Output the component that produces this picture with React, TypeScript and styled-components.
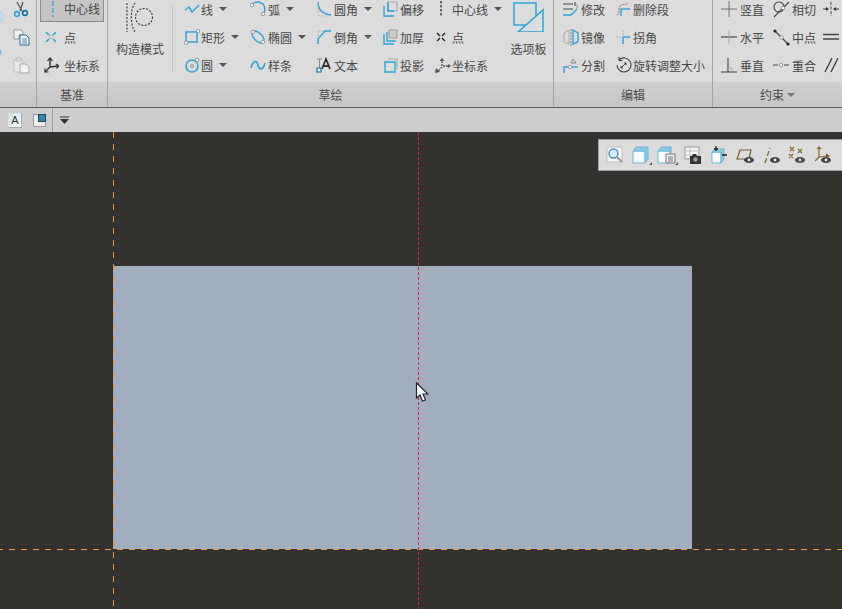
import React from 'react';
import styled, { createGlobalStyle } from 'styled-components';

const BLUE = '#2aa6dc';
const INK = '#484848';

const GlobalStyle = createGlobalStyle`
  html, body {
    margin: 0;
    padding: 0;
    height: 100%;
    overflow: hidden;
    background: #34322e;
  }
  body {
    font-family: "Noto Sans CJK SC", "Liberation Sans", sans-serif;
    font-size: 12px;
    color: ${INK};
  }
`;

const Page = styled.div`
  width: 842px;
  height: 609px;
  display: flex;
  flex-direction: column;
  overflow: hidden;
`;

const Ribbon = styled.div`
  display: flex;
  height: 108px;
  flex: none;
  border-bottom: 1px solid #5e5e5e;
  box-sizing: border-box;
  background: #dcdcdc;
`;

const Group = styled.section<{ $width: number; $last?: boolean }>`
  width: ${(p) => p.$width}px;
  flex: none;
  display: flex;
  flex-direction: column;
  box-sizing: border-box;
  border-right: ${(p) => (p.$last ? 'none' : '1px solid #a2a2a2')};
`;

const GroupBody = styled.div<{ $pad?: number }>`
  height: 82px;
  display: flex;
  overflow: hidden;
  padding-left: ${(p) => p.$pad ?? 0}px;
`;

const GroupLabel = styled.div`
  height: 25px;
  display: flex;
  align-items: center;
  justify-content: center;
  gap: 3px;
  background: linear-gradient(#cfcfcf, #c6c6c6);
  line-height: 25px;
  color: #4a4a4a;
`;

const LabelCaret = styled.span`
  border-left: 4px solid transparent;
  border-right: 4px solid transparent;
  border-top: 4px solid #777;
`;

const Column = styled.div<{ $width: number }>`
  width: ${(p) => p.$width}px;
  flex: none;
  margin-top: -5px;
  display: flex;
  flex-direction: column;
`;

const Tool = styled.div<{ $active?: boolean }>`
  height: 28px;
  flex: none;
  display: flex;
  align-items: center;
  white-space: nowrap;
  box-sizing: border-box;
  ${(p) =>
    p.$active
      ? `background:#c5c5c5; border:1px solid #8c8c8c; margin:0 3px 1px 3px; height:27px;`
      : ''}
`;

const ToolIcon = styled.span<{ $width: number }>`
  width: ${(p) => p.$width}px;
  flex: none;
  display: flex;
  align-items: center;
  justify-content: center;
`;

const Caret = styled.span`
  margin-left: 6px;
  border-left: 4px solid transparent;
  border-right: 4px solid transparent;
  border-top: 4px solid #555;
`;

const BigTool = styled.div<{ $width: number }>`
  width: ${(p) => p.$width}px;
  flex: none;
  display: flex;
  flex-direction: column;
  align-items: center;
  padding-top: 2px;
  gap: 8px;
  white-space: nowrap;
`;

const GroupRule = styled.div`
  width: 1px;
  flex: none;
  height: 68px;
  margin: 5px 9px 0 0;
  background: #c4c4c4;
`;

const ClippedIcons = styled.div`
  width: 12px;
  flex: none;
  display: flex;
  flex-direction: column;
  padding-top: 10px;
  gap: 26px;
`;

const Toolbar = styled.div`
  height: 24px;
  flex: none;
  display: flex;
  align-items: center;
  padding-left: 8px;
  background: #cdcdcd;
`;

const ToolbarRule = styled.div`
  width: 1px;
  height: 24px;
  margin: 0 7px 0 6px;
  background: #a0a0a0;
`;

const Canvas = styled.main`
  position: relative;
  flex: 1;
  background: #34322e;
  overflow: hidden;
`;

const Sheet = styled.div`
  position: absolute;
  left: 113px;
  top: 134px;
  width: 579px;
  height: 283px;
  background: #a0aebd;
`;

const AxisV = styled.div`
  position: absolute;
  left: 113px;
  top: 0;
  bottom: 0;
  width: 1px;
  background: repeating-linear-gradient(to bottom, #ee9433 0 6px, transparent 6px 12px);
`;

const AxisH = styled.div`
  position: absolute;
  left: 0;
  right: 0;
  top: 417px;
  height: 1px;
  background: repeating-linear-gradient(
    to right,
    #ee9433 0 3px,
    transparent 3px 9px,
    #ee9433 9px 12px
  );
`;

const CenterLine = styled.div`
  position: absolute;
  left: 418px;
  top: 0;
  bottom: 0;
  width: 1px;
  background: repeating-linear-gradient(to bottom, #ef1744 0 3px, transparent 3px 5px);
`;

const Cursor = styled.svg`
  position: absolute;
  left: 415px;
  top: 250px;
`;

const ViewBar = styled.div`
  position: absolute;
  left: 598px;
  right: 0;
  top: 7px;
  height: 32px;
  box-sizing: border-box;
  display: flex;
  align-items: center;
  padding-left: 3px;
  background: #dcdcdc;
  border: 1px solid #9c9c9c;
  border-right: none;
`;

const ViewButton = styled.span`
  width: 26px;
  flex: none;
  display: flex;
  justify-content: center;
`;

function Ico({ s = 16, children }: { s?: number; children: React.ReactNode }) {
  return (
    <svg width={s} height={s} viewBox={`0 0 ${s} ${s}`} fill="none" strokeWidth={1.3}>
      {children}
    </svg>
  );
}

const Node = ({ x, y }: { x: number; y: number }) => (
  <circle cx={x} cy={y} r={1.8} fill="#f2f2f2" stroke="#8a8a8a" strokeWidth={0.8} />
);

const Eye = ({ x, y }: { x: number; y: number }) => (
  <g>
    <ellipse cx={x} cy={y} rx={5} ry={3} fill="#444" />
    <circle cx={x} cy={y} r={1.4} fill="#e8e8e8" />
  </g>
);

const icons: Record<string, React.ReactNode> = {
  cut: (
    <Ico>
      <path d="M4 1l5 9M10 1L7 10" stroke="#555" />
      <circle cx="4" cy="13" r="2.4" stroke={BLUE} strokeWidth={1.6} />
      <circle cx="12" cy="12" r="2.4" stroke="#1e6f96" strokeWidth={1.6} />
    </Ico>
  ),
  copy: (
    <Ico s={17}>
      <path d="M1 1h7l2 2v3H6v4H1z" fill="#f4f4f4" stroke="#999" strokeWidth={1} />
      <path d="M7 6h6l3 3v7H7z" fill="#f8f8f8" stroke="#1e6f96" strokeWidth={1} />
      <path d="M9 10h5M9 12h5M9 14h5" stroke="#1e6f96" strokeWidth={0.8} />
    </Ico>
  ),
  paste: (
    <Ico s={17}>
      <path d="M1 3h9v12H1z" fill="#e9e9e9" stroke="#c0c0c0" strokeWidth={1} />
      <path d="M3 1h5v3H3z" fill="#ddd" stroke="#bbb" strokeWidth={1} />
      <path d="M7 7h6l3 3v6H7z" fill="#f2f2f2" stroke="#aaa" strokeWidth={1} />
    </Ico>
  ),
  centerline: (
    <Ico>
      <path d="M8 0v16" stroke={BLUE} strokeWidth={1.3} strokeDasharray="5 2" />
    </Ico>
  ),
  point: (
    <Ico>
      <path d="M3 3l3 3M13 3l-3 3M3 13l3-3M13 13l-3-3" stroke={BLUE} strokeWidth={1.5} />
      <rect x="6.500" y="6.500" width="3" height="3" stroke="#bbb" strokeWidth={0.8} />
    </Ico>
  ),
  axes: (
    <Ico>
      <path d="M7 2v8M7 10l8-1M7 10l-5 5" stroke="#333" strokeWidth={1.4} />
      <path d="M4.500 4L7 1l2.500 3M13 7l3 2-2.500 2.500M2 11.500V15h3.500" stroke="#333" strokeWidth={1.2} />
    </Ico>
  ),
  line: (
    <Ico>
      <path d="M1 9l4-3 3 5 7-7" stroke={BLUE} strokeWidth={1.5} />
    </Ico>
  ),
  rect: (
    <Ico>
      <path d="M2 3h11v10H2z" stroke={BLUE} strokeWidth={1.5} />
      <Node x={14} y={2} />
      <Node x={2} y={14} />
    </Ico>
  ),
  circle: (
    <Ico>
      <circle cx="8" cy="9" r="6" stroke={BLUE} strokeWidth={1.5} />
      <circle cx="8" cy="9" r="2" fill="#aaa" />
      <Node x={13} y={3} />
    </Ico>
  ),
  arc: (
    <Ico>
      <path d="M2 3a9 9 0 0 1 11 0 9 9 0 0 1 1 9" stroke={BLUE} strokeWidth={1.5} />
      <Node x={2} y={4} />
      <Node x={13} y={13} />
    </Ico>
  ),
  ellipse: (
    <Ico>
      <ellipse cx="8" cy="8" rx="7.500" ry="4" transform="rotate(45 8 8)" stroke={BLUE} strokeWidth={1.5} />
      <Node x={3} y={3} />
      <Node x={13} y={13} />
    </Ico>
  ),
  spline: (
    <Ico>
      <path d="M1 11c2-8 6-8 7-3s5 6 7-2" stroke={BLUE} strokeWidth={1.6} />
    </Ico>
  ),
  fillet: (
    <Ico>
      <path d="M2 1c0 8 4 12 13 13" stroke={BLUE} strokeWidth={1.5} />
      <path d="M2 1v14h13" stroke="#aaa" strokeWidth={0.8} strokeDasharray="1.500 1.500" />
    </Ico>
  ),
  chamfer: (
    <Ico>
      <path d="M2 15V10L9 2h6" stroke={BLUE} strokeWidth={1.5} />
      <path d="M2 10V2h7" stroke="#999" strokeWidth={0.8} strokeDasharray="1.500 1.500" />
    </Ico>
  ),
  text: (
    <Ico>
      <path d="M1 2h5M3.500 2v9" stroke="#888" strokeWidth={1} />
      <path d="M6 12l4-10 4 10M7.500 9h5" stroke="#333" strokeWidth={1.8} />
      <rect x="1" y="11" width="4" height="4" fill="#fff" stroke="#1e7fae" />
    </Ico>
  ),
  offset: (
    <Ico>
      <path d="M5 1h9v9H5z" stroke="#aaa" strokeWidth={1.2} />
      <path d="M1 5v10h10M5 1v9h6" stroke={BLUE} strokeWidth={1.4} />
    </Ico>
  ),
  thicken: (
    <Ico>
      <path d="M6 1h8v8H6z" fill="#ccc" stroke="#999" strokeWidth={1} />
      <path d="M1 5v10h10M4 3v9h9" stroke={BLUE} strokeWidth={1.4} />
    </Ico>
  ),
  project: (
    <Ico>
      <path d="M5 2h9v10" stroke="#aaa" strokeWidth={1.2} />
      <path d="M2 5h10v10H2z" stroke={BLUE} strokeWidth={1.4} />
    </Ico>
  ),
  dashV: (
    <Ico>
      <path d="M6 0v16" stroke="#222" strokeWidth={1.2} strokeDasharray="2.500 1.500" />
    </Ico>
  ),
  pointK: (
    <Ico>
      <path d="M2 4l3 3M10 4L7 7M2 12l3-3M10 12L7 9" stroke="#222" strokeWidth={1.4} />
    </Ico>
  ),
  axesK: (
    <Ico s={17}>
      <path d="M8 4v5M9 9h5M8 10l-4 4" stroke="#555" strokeDasharray="2 1" />
      <path d="M5.500 4L8 1l2.500 3zM14 7l3 2-3 2zM1 16l1-5 4 4z" fill="#555" />
    </Ico>
  ),
  modify: (
    <Ico s={17}>
      <path d="M1 3h10M1 8h10M13 1v4" stroke="#444" strokeWidth={1} />
      <path d="M1 14h8l6-6" stroke={BLUE} strokeWidth={1.4} />
      <path d="M13 3l3 2-2 3" stroke="#888" strokeWidth={0.8} />
    </Ico>
  ),
  trim: (
    <Ico>
      <path d="M2 14c4-2 0-6 3-9s5 0 8-3" stroke="#b5523c" strokeWidth={1} strokeDasharray="2 1" />
      <path d="M6 15V8h9" stroke={BLUE} strokeWidth={1.5} />
    </Ico>
  ),
  mirror: (
    <Ico s={17}>
      <path d="M2 4l5-3v14l-5-2z" fill="#ddd" stroke="#aaa" strokeWidth={1} />
      <path d="M11 1l5 3v9l-5 2z" stroke={BLUE} strokeWidth={1.4} />
      <path d="M9 0v17" stroke="#777" strokeWidth={0.8} strokeDasharray="2 1" />
    </Ico>
  ),
  corner: (
    <Ico>
      <path d="M1 8h5M8 1v5" stroke="#aaa" strokeWidth={1} strokeDasharray="2 1" />
      <path d="M8 15V8h7" stroke={BLUE} strokeWidth={1.5} />
    </Ico>
  ),
  split: (
    <Ico s={17}>
      <path d="M2 16V10h4" stroke={BLUE} strokeWidth={1.4} />
      <path d="M10 10h6" stroke={BLUE} strokeWidth={1.4} />
      <path d="M11 2l3 4h-5zM6 10h4" stroke="#777" strokeWidth={0.8} />
      <Node x={8} y={10} />
    </Ico>
  ),
  rotate: (
    <Ico s={17}>
      <path d="M4 3a7 7 0 1 1-2 5M4 0v3.500h3.500" stroke="#444" strokeWidth={1.1} />
      <path d="M6 11l5-5M9 6h2v2M6 9v2h2" stroke="#444" strokeWidth={1} />
    </Ico>
  ),
  vertical: (
    <Ico>
      <path d="M8 0v16M0 8h16" stroke="#777" strokeWidth={1} />
    </Ico>
  ),
  horizontal: (
    <Ico>
      <path d="M0 8h16" stroke="#444" strokeWidth={1.2} />
      <path d="M8 1v14" stroke="#aaa" strokeWidth={1} />
    </Ico>
  ),
  perpendicular: (
    <Ico>
      <path d="M0 15h16M7 1v14" stroke="#444" strokeWidth={1.1} />
      <path d="M7 11h4v4" stroke="#999" strokeWidth={0.8} />
    </Ico>
  ),
  tangent: (
    <Ico s={17}>
      <circle cx="6" cy="6" r="5" stroke="#444" strokeWidth={1.1} />
      <path d="M1 16L16 1" stroke="#444" strokeWidth={1.1} />
      <Node x={10} y={7} />
    </Ico>
  ),
  midpoint: (
    <Ico s={17}>
      <path d="M2 2l13 13" stroke="#444" strokeWidth={1.2} />
      <circle cx="2" cy="2" r="1.600" fill="#222" />
      <circle cx="15" cy="15" r="1.600" fill="#222" />
      <Node x={8.500} y={8.500} />
    </Ico>
  ),
  coincident: (
    <Ico>
      <path d="M0 8h5M11 8h5" stroke="#444" strokeWidth={1.1} />
      <Node x={8} y={8} />
    </Ico>
  ),
  fix: (
    <Ico>
      <path d="M8 1v14" stroke="#444" strokeWidth={1} strokeDasharray="3 1.500" />
      <path d="M0 8h5M16 8h-5" stroke="#333" strokeWidth={1.2} />
      <path d="M3 6l3 2-3 2zM13 6l-3 2 3 2z" fill="#333" />
    </Ico>
  ),
  equal: (
    <Ico>
      <path d="M0 5.500h16M0 10h16" stroke="#444" strokeWidth={1.3} />
    </Ico>
  ),
  parallel: (
    <Ico>
      <path d="M2 15L9 1M8 15L15 1" stroke="#333" strokeWidth={1.2} />
    </Ico>
  )
};

function ToolItem({
  name,
  label,
  width = 20,
  caret,
  active
}: {
  name: string;
  label?: string;
  width?: number;
  caret?: boolean;
  active?: boolean;
}) {
  return (
    <Tool $active={active}>
      <ToolIcon $width={width}>{icons[name]}</ToolIcon>
      {label}
      {caret && <Caret />}
    </Tool>
  );
}

const AppIconA = styled.span`
  width: 14px;
  height: 15px;
  display: flex;
  align-items: center;
  justify-content: center;
  font-family: "Liberation Sans", sans-serif;
  font-size: 11px;
  color: #333;
  background: linear-gradient(135deg, #cfe4ee, #fafafa);
  border: 1px solid #aaa;
  border-top-color: #ddd;
  border-left-color: #ddd;
  box-sizing: border-box;
`;

const AppIconSquare = styled.span`
  width: 13px;
  height: 13px;
  margin-left: 11px;
  position: relative;
  background: #ececec;
  border: 1px solid #999;
  box-sizing: border-box;

  &::after {
    content: '';
    position: absolute;
    right: -1px;
    top: -1px;
    width: 8px;
    height: 8px;
    background: #2e87a8;
    border: 1px solid #245;
    box-sizing: border-box;
  }
`;

const ToolbarMenu = styled.svg`
  flex: none;
`;

const corner = <path d="M22 16v3h-3z" fill="#555" />;

const viewIcons: React.ReactNode[] = [
  <svg width="18" height="18" viewBox="0 0 18 18" key="zoom">
    <path d="M1 1h15v15H1z" fill="#f8f8f8" stroke="#bbb" />
    <circle cx="7.500" cy="7.500" r="4.500" fill="#d8eef8" stroke="#3f94bd" strokeWidth={1.4} />
    <path d="M11 11l5 5" stroke="#999" strokeWidth={2} />
  </svg>,
  <svg width="22" height="19" viewBox="0 0 22 19" key="cube">
    <path d="M3 5h12v12H3z" fill="#f8fcff" stroke="#6bb6d8" />
    <path d="M3 5l3-4h12v12l-3 4V5z" fill="#8ecbe6" stroke="#6bb6d8" />
    {corner}
  </svg>,
  <svg width="22" height="19" viewBox="0 0 22 19" key="cubeList">
    <path d="M2 5h12v12H2z" fill="#f8fcff" stroke="#6bb6d8" />
    <path d="M2 5l3-4h10v6H14V5z" fill="#8ecbe6" stroke="#6bb6d8" />
    <path d="M10 8h9v9h-9z" fill="#eee" stroke="#777" />
    <path d="M12 11h5M12 13h5M12 15h5" stroke="#555" strokeWidth={0.8} />
    {corner}
  </svg>,
  <svg width="18" height="18" viewBox="0 0 18 18" key="camera">
    <path d="M1 1h14v12H1z" fill="#f4f4f4" stroke="#999" />
    <path d="M1 5h14M1 9h14M6 1v12" stroke="#bbb" strokeWidth={0.8} />
    <path d="M6 10h2l1-2h3l1 2h4v8H6z" fill="#333" />
    <circle cx="11.500" cy="13.500" r="2.300" fill="#999" />
  </svg>,
  <svg width="18" height="18" viewBox="0 0 18 18" key="move">
    <path d="M2 6h9v11H2z" fill="#f8fcff" stroke="#6bb6d8" />
    <path d="M2 6l3-3h9v10l-3 4V6z" fill="#8ecbe6" stroke="#6bb6d8" />
    <path d="M6 0v5M4 3h4M12 9h5" stroke="#222" strokeWidth={1.3} />
  </svg>,
  <svg width="18" height="18" viewBox="0 0 18 18" key="plane">
    <path d="M1 13L4 4h11l-2 9z" fill="none" stroke="#7a5a2c" strokeWidth={1.2} />
    <Eye x={13} y={14} />
  </svg>,
  <svg width="18" height="18" viewBox="0 0 18 18" key="axis">
    <path d="M3 17L8 2" stroke="#8a6a30" strokeWidth={1.4} strokeDasharray="5 2.500" />
    <Eye x={13} y={14} />
  </svg>,
  <svg width="18" height="18" viewBox="0 0 18 18" key="points">
    <path
      d="M2 1l4 4M6 1L2 5M10 3l4 4M14 3l-4 4M1 8l4 4M5 8l-4 4"
      stroke="#8a6a30"
      strokeWidth={1.3}
    />
    <Eye x={12} y={14} />
  </svg>,
  <svg width="18" height="18" viewBox="0 0 18 18" key="coord">
    <path d="M5 1v10M5 11l9-1M5 11l-4 4M3 3l2-2 2 2M12 8l3 2-3 1" stroke="#8a6a30" strokeWidth={1.2} />
    <Eye x={12} y={14} />
  </svg>
];

export default function App() {
  return (
    <Page>
      <GlobalStyle />
      <Ribbon>
        <Group $width={37}>
          <GroupBody>
            <ClippedIcons>
              <svg width="4" height="14" viewBox="0 0 4 14">
                <path d="M0 1l3 2v8l-3 1z" fill="#cfe6f2" stroke="#a9cfe2" />
              </svg>
              <svg width="2" height="6" viewBox="0 0 2 6">
                <path d="M0 0h1M0 2h2M0 4h1" stroke={BLUE} />
              </svg>
            </ClippedIcons>
            <Column $width={20}>
              <ToolItem name="cut" width={18} />
              <ToolItem name="copy" width={18} />
              <ToolItem name="paste" width={18} />
            </Column>
          </GroupBody>
          <GroupLabel />
        </Group>

        <Group $width={71}>
          <GroupBody>
            <Column $width={70}>
              <ToolItem name="centerline" width={23} label="中心线" active />
              <ToolItem name="point" width={27} label="点" />
              <ToolItem name="axes" width={27} label="坐标系" />
            </Column>
          </GroupBody>
          <GroupLabel>基准</GroupLabel>
        </Group>

        <Group $width={446}>
          <GroupBody>
            <BigTool $width={64}>
              <svg width="30" height="30" viewBox="0 0 30 30" fill="none" stroke="#333" strokeWidth={1.1}>
                <path d="M2 1v30" strokeDasharray="2 1.500" />
                <path d="M10 1C5 8 5 22 10 30" strokeDasharray="2 1.500" />
                <circle cx="19" cy="15" r="8.500" strokeDasharray="2 1.500" />
              </svg>
              构造模式
            </BigTool>
            <GroupRule />
            <Column $width={66}>
              <ToolItem name="line" width={19} label="线" caret />
              <ToolItem name="rect" width={19} label="矩形" caret />
              <ToolItem name="circle" width={19} label="圆" caret />
            </Column>
            <Column $width={66}>
              <ToolItem name="arc" label="弧" caret />
              <ToolItem name="ellipse" label="椭圆" caret />
              <ToolItem name="spline" label="样条" />
            </Column>
            <Column $width={67}>
              <ToolItem name="fillet" label="圆角" caret />
              <ToolItem name="chamfer" label="倒角" caret />
              <ToolItem name="text" label="文本" />
            </Column>
            <Column $width={52}>
              <ToolItem name="offset" width={19} label="偏移" />
              <ToolItem name="thicken" width={19} label="加厚" />
              <ToolItem name="project" width={19} label="投影" />
            </Column>
            <Column $width={75}>
              <ToolItem name="dashV" width={19} label="中心线" caret />
              <ToolItem name="pointK" width={19} label="点" />
              <ToolItem name="axesK" width={19} label="坐标系" />
            </Column>
            <BigTool $width={41}>
              <svg width="32" height="30" viewBox="0 0 32 30" fill="none" stroke={BLUE} strokeWidth={1.5}>
                <path d="M1 1h22v22H1z" />
                <path d="M5 30L30 8v22z" fill="#dcdcdc" />
              </svg>
              选项板
            </BigTool>
          </GroupBody>
          <GroupLabel>草绘</GroupLabel>
        </Group>

        <Group $width={159}>
          <GroupBody $pad={5}>
            <Column $width={54}>
              <ToolItem name="modify" width={22} label="修改" />
              <ToolItem name="mirror" width={22} label="镜像" />
              <ToolItem name="split" width={22} label="分割" />
            </Column>
            <Column $width={96}>
              <ToolItem name="trim" width={20} label="删除段" />
              <ToolItem name="corner" width={20} label="拐角" />
              <ToolItem name="rotate" width={20} label="旋转调整大小" />
            </Column>
          </GroupBody>
          <GroupLabel>编辑</GroupLabel>
        </Group>

        <Group $width={129} $last>
          <GroupBody $pad={5}>
            <Column $width={52}>
              <ToolItem name="vertical" width={22} label="竖直" />
              <ToolItem name="horizontal" width={22} label="水平" />
              <ToolItem name="perpendicular" width={22} label="垂直" />
            </Column>
            <Column $width={52}>
              <ToolItem name="tangent" width={22} label="相切" />
              <ToolItem name="midpoint" width={22} label="中点" />
              <ToolItem name="coincident" width={22} label="重合" />
            </Column>
            <Column $width={20}>
              <ToolItem name="fix" width={18} />
              <ToolItem name="equal" width={18} />
              <ToolItem name="parallel" width={18} />
            </Column>
          </GroupBody>
          <GroupLabel>
            约束
            <LabelCaret />
          </GroupLabel>
        </Group>
      </Ribbon>

      <Toolbar>
        <AppIconA>A</AppIconA>
        <AppIconSquare />
        <ToolbarRule />
        <ToolbarMenu width="9" height="9" viewBox="0 0 9 9">
          <path d="M0 1h9" stroke="#333" />
          <path d="M0 3h9L4.500 8z" fill="#333" />
        </ToolbarMenu>
      </Toolbar>

      <Canvas>
        <Sheet />
        <AxisV />
        <AxisH />
        <CenterLine />
        <Cursor width="14" height="22" viewBox="0 0 14 22">
          <path d="M1.500 1v15l3.500-3 2.500 6 3-1-2.500-6h5z" fill="#fff" stroke="#1d2433" strokeWidth={1.2} />
        </Cursor>
        <ViewBar>
          {viewIcons.map((icon, i) => (
            <ViewButton key={i}>{icon}</ViewButton>
          ))}
        </ViewBar>
      </Canvas>
    </Page>
  );
}
